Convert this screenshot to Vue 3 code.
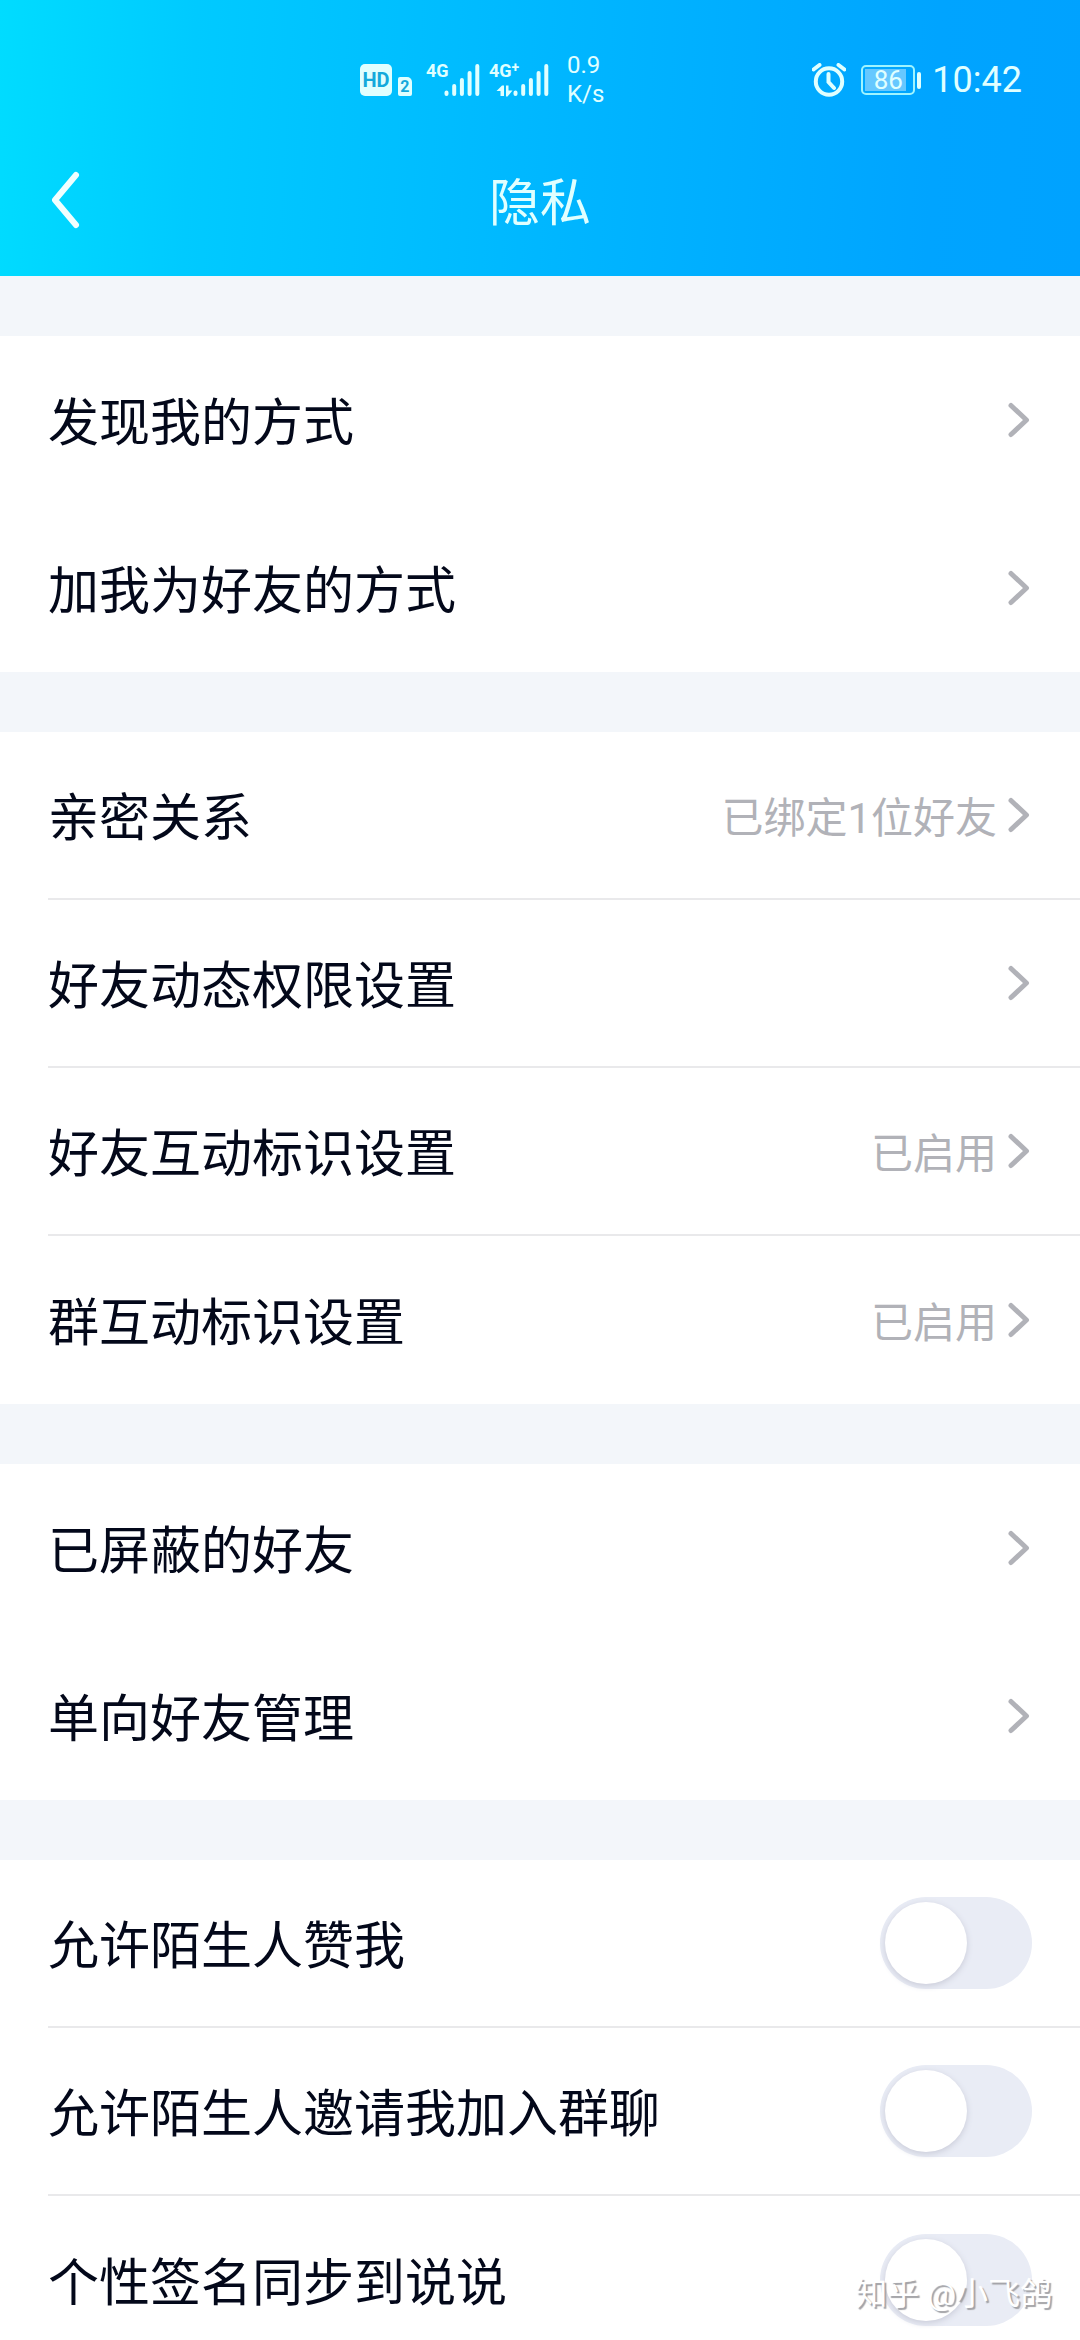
<script setup>
import { reactive } from 'vue'

const groups = [
  {
    divided: false,
    rows: [{ label: '发现我的方式' }, { label: '加我为好友的方式' }],
  },
  {
    divided: true,
    rows: [
      { label: '亲密关系', value: '已绑定1位好友' },
      { label: '好友动态权限设置' },
      { label: '好友互动标识设置', value: '已启用' },
      { label: '群互动标识设置', value: '已启用' },
    ],
  },
  {
    divided: false,
    rows: [{ label: '已屏蔽的好友' }, { label: '单向好友管理' }],
  },
]

const switches = reactive([
  { id: 'like', label: '允许陌生人赞我', on: false },
  { id: 'invite', label: '允许陌生人邀请我加入群聊', on: false },
  { id: 'sync', label: '个性签名同步到说说', on: false },
])
</script>

<template>
  <div class="page">
    <header class="header">
      <div class="status">
        <div class="status-left">
          <span class="hd">HD</span>
          <span class="sim">2</span>
          <div class="signal">
            <span class="net">4G</span>
            <svg width="36" height="34" viewBox="0 0 36 34" aria-hidden="true">
              <path d="M2.5 29.5V31M10.2 23V31M17.9 17V31M25.6 10V31M33.3 3V31" />
            </svg>
          </div>
          <div class="signal second">
            <span class="net">4G<sup>+</sup></span>
            <svg width="53" height="34" viewBox="0 0 53 34" aria-hidden="true">
              <path d="M19.5 29.5V31M27.2 23V31M34.9 17V31M42.6 10V31M50.3 3V31" />
              <path class="arrows" d="M4.500 33V28H0.500L6 22.500H8V33ZM10 22.500H12.500V27.500H16.500L11.500 33.500H10Z" />
            </svg>
          </div>
          <div class="speed"><span>0.9</span><span>K/s</span></div>
        </div>
        <div class="status-right">
          <svg class="alarm" width="34" height="34" viewBox="0 0 34 34" aria-hidden="true">
            <circle cx="17" cy="18.500" r="13.200" />
            <path d="M16.500 11V19L22 25M1.500 6.500L7.500 2M32.500 6.500L26.500 2" />
          </svg>
          <div class="battery">
            <span class="cell"><span class="charge">86</span></span>
            <span class="tip"></span>
          </div>
          <time class="clock">10:42</time>
        </div>
      </div>
      <div class="titlebar">
        <button class="back" type="button" aria-label="返回">
          <svg width="32" height="60" viewBox="0 0 32 60" aria-hidden="true">
            <path d="M28 5L7 30L28 55" />
          </svg>
        </button>
        <h1>隐私</h1>
      </div>
    </header>

    <main>
      <section v-for="(group, i) in groups" :key="i" class="group" :class="{ divided: group.divided }">
        <button v-for="row in group.rows" :key="row.label" class="row" type="button">
          <span class="label">{{ row.label }}</span>
          <span v-if="row.value" class="value">{{ row.value }}</span>
          <svg class="chevron" width="24" height="40" viewBox="0 0 24 40" aria-hidden="true">
            <path d="M3 5.500L18.500 20L3 34.500" />
          </svg>
        </button>
      </section>

      <section class="group divided">
        <label v-for="item in switches" :key="item.id" class="row" :for="item.id">
          <span class="label">{{ item.label }}</span>
          <input :id="item.id" v-model="item.on" class="switch" type="checkbox" role="switch" />
        </label>
      </section>
    </main>

    <div class="watermark">知乎 @小飞鸽</div>
  </div>
</template>

<style>
body {
  margin: 0;
  background: #f3f6fa;
}
</style>

<style scoped>
.page {
  position: relative;
  height: 100vh;
  overflow: hidden;
  background: #f3f6fa;
  color: #03081a;
  font-family: Roboto, "Noto Sans CJK SC", sans-serif;
}

.header {
  background: linear-gradient(93deg, #00dcff 0%, #00caff 18%, #00b6ff 52%, #00a4ff 86%, #00a2ff 100%);
  color: #e0ffff;
}

.status {
  display: flex;
  align-items: center;
  justify-content: space-between;
  box-sizing: border-box;
  height: 124px;
  padding: 36px 58px 0 33.33%;
}

.status-left,
.status-right {
  display: flex;
  align-items: center;
}

.hd {
  width: 32px;
  border-radius: 5px;
  background: #e0ffff;
  color: #14a9dc;
  font-size: 20px;
  font-weight: 700;
  line-height: 32px;
  text-align: center;
}

.sim {
  align-self: flex-end;
  width: 14px;
  margin: 0 14px 13px 6px;
  border-radius: 2px 5px 2px 2px;
  background: #e0ffff;
  color: #14a9dc;
  font-size: 16px;
  font-weight: 700;
  line-height: 19px;
  text-align: center;
}

.signal {
  position: relative;
  display: flex;
  align-items: flex-start;
  justify-content: flex-end;
  width: 54px;
  height: 34px;
}

.second {
  width: 60px;
  margin-left: 9px;
}

.signal path {
  fill: none;
  stroke: #e0ffff;
  stroke-width: 4;
  stroke-linecap: round;
}

.signal .arrows {
  fill: #e0ffff;
  stroke: none;
}

.net {
  position: absolute;
  top: 0;
  left: 0;
  font-size: 18px;
  font-weight: 700;
  line-height: 16px;
}

.net sup {
  font-size: 14px;
  line-height: 8px;
  vertical-align: 5px;
}

.speed {
  display: flex;
  flex-direction: column;
  margin-left: 18px;
  font-size: 24px;
  line-height: 29px;
}

.alarm {
  margin-right: 15px;
  fill: none;
  stroke: #e0ffff;
  stroke-width: 4;
  stroke-linecap: round;
}

.battery {
  display: flex;
  align-items: center;
  gap: 2px;
  margin-right: 11px;
}

.cell {
  box-sizing: border-box;
  width: 54px;
  height: 30px;
  padding: 2px;
  border: 2px solid #9ff4ff;
  border-radius: 5px;
}

.charge {
  display: block;
  box-sizing: border-box;
  width: 41px;
  padding-left: 5px;
  background: #66c8ff;
  font-size: 26px;
  line-height: 22px;
  text-align: center;
}

.tip {
  width: 4px;
  height: 17px;
  border-radius: 2px;
  background: #e0ffff;
}

.clock {
  font-size: 36px;
  line-height: 44px;
}

.titlebar {
  display: grid;
  grid-template-columns: 1fr auto 1fr;
  align-items: center;
  height: 152px;
  padding: 0 48px;
}

.back {
  justify-self: start;
  display: flex;
  padding: 0;
  border: 0;
  background: none;
}

.back path {
  fill: none;
  stroke: #f0ffff;
  stroke-width: 6;
  stroke-linecap: round;
  stroke-linejoin: round;
}

h1 {
  margin: 0;
  padding-top: 8px;
  font-size: 51px;
  font-weight: 400;
  line-height: 72px;
}

.group {
  margin-top: 60px;
  padding-left: 48px;
  background: #fff;
}

.row {
  display: flex;
  align-items: center;
  box-sizing: border-box;
  width: 100%;
  height: 168px;
  padding: 0 48px 0 0;
  border: 0;
  background: none;
  color: inherit;
  font: inherit;
  text-align: left;
}

.divided .row:not(:last-child) {
  border-bottom: 2px solid #e9e9eb;
}

.label {
  flex: 1;
  padding-top: 8px;
  font-size: 51px;
  line-height: 72px;
}

.value {
  margin-right: 11px;
  padding-top: 8px;
  color: #b1b2b8;
  font-size: 42px;
  line-height: 60px;
}

.chevron path {
  fill: none;
  stroke: #b1b2b8;
  stroke-width: 5;
  stroke-linecap: round;
  stroke-linejoin: round;
}

.switch {
  appearance: none;
  box-sizing: border-box;
  width: 152px;
  height: 92px;
  margin: 0;
  padding: 5px;
  border-radius: 46px;
  background: #e9ecf5;
}

.switch::before {
  content: "";
  display: block;
  width: 82px;
  height: 82px;
  border-radius: 50%;
  background: #fff;
  box-shadow: 0 2px 6px #c9cbd8;
}

.switch:checked {
  background: #00a8ff;
}

.switch:checked::before {
  margin-left: auto;
}

.watermark {
  position: absolute;
  right: 28px;
  bottom: 24px;
  color: #fff;
  font-size: 32px;
  line-height: 44px;
  text-shadow: 2px 2px 1px #a2a2a6;
}
</style>
